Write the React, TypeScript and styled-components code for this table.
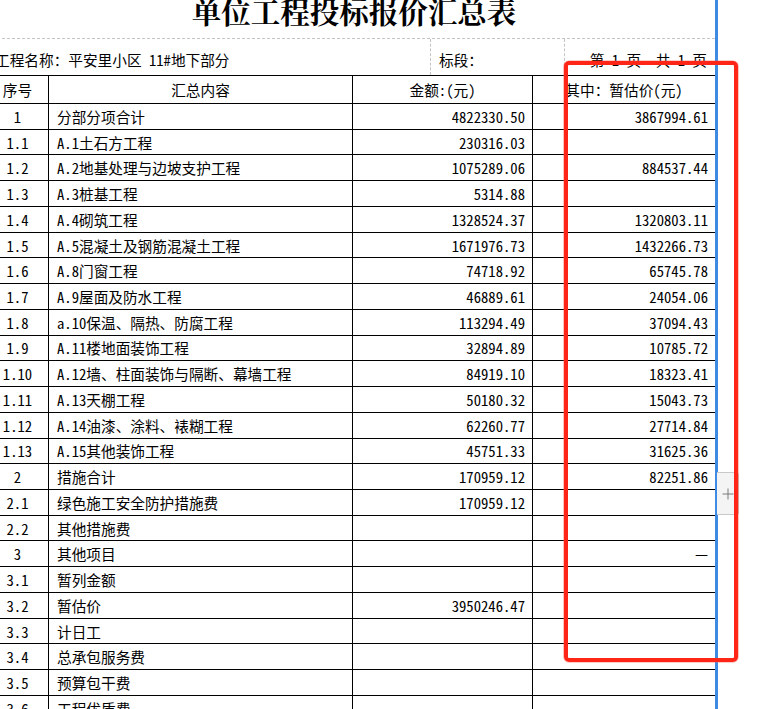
import React from "react";
import styled, { createGlobalStyle } from "styled-components";

const Global = createGlobalStyle`
  html, body { margin: 0; padding: 0; background: #fff; overflow: hidden; }
  #root { width: 763px; height: 709px; }
`;

const FONT = `"Noto Sans Mono CJK SC", "Noto Sans CJK SC", monospace`;

const Page = styled.div`
  position: relative;
  display: flex;
  width: 763px;
  height: 709px;
  overflow: hidden;
  font-family: ${FONT};
  font-size: 14.67px;
  color: #000;
`;

const Sheet = styled.div`
  flex: none;
  width: 728px;
  margin-left: -13px;
  display: flex;
  flex-direction: column;
  overflow: hidden;
  & > * { flex: none; }
`;

const TitleRow = styled.div`
  box-sizing: border-box;
  height: 39px;
  overflow: hidden;
  display: flex;
  align-items: flex-end;
  justify-content: center;
  padding-bottom: 13px;
  padding-left: 6px;
  border-bottom: 1px dashed #c4c4c4;
`;

const TitleText = styled.div`
  font-family: "Noto Serif CJK SC", "Noto Sans CJK SC", serif;
  font-weight: 700;
  font-size: 29.5px;
  line-height: 30px;
  white-space: nowrap;
`;

const InfoRow = styled.div`
  display: grid;
  grid-template-columns: 443px 134px 1fr;
  height: 36px;
`;

const InfoCell = styled.div<{ $dashed?: boolean; $right?: boolean }>`
  box-sizing: border-box;
  display: flex;
  align-items: flex-end;
  justify-content: ${(p) => (p.$right ? "flex-end" : "flex-start")};
  padding: 0 8px 5px 8px;
  border-left: ${(p) => (p.$dashed ? "1px dashed #c4c4c4" : "none")};
  white-space: pre;
`;

const COLS = "62px 304px 180px 182px";

const HeaderRow = styled.div`
  box-sizing: border-box;
  display: grid;
  grid-template-columns: ${COLS};
  height: 29px;
  border-top: 1px solid #000;
  border-bottom: 1px solid #000;
`;

const DataRow = styled.div`
  box-sizing: border-box;
  display: grid;
  grid-template-columns: ${COLS};
  height: 25.74px;
  border-bottom: 1px solid #000;
`;

const Cell = styled.div<{ $align: "left" | "center" | "right"; $last?: boolean }>`
  box-sizing: border-box;
  display: flex;
  align-items: center;
  justify-content: ${(p) =>
    p.$align === "left" ? "flex-start" : p.$align === "right" ? "flex-end" : "center"};
  padding: 0 ${(p) => (p.$align === "right" ? "7px" : "8px")} 0 8px;
  border-right: ${(p) => (p.$last ? "none" : "1px solid #000")};
  white-space: pre;
  overflow: hidden;
`;

const NumCell = styled(Cell)`
  padding-left: 0;
  padding-right: 0;
`;

const Splitter = styled.div`
  flex: none;
  width: 3px;
  height: 100%;
  background: #3f8be3;
`;

const Gutter = styled.div`
  flex: 1;
  background: #fff;
`;

const PlusTab = styled.div`
  position: absolute;
  left: 717px;
  top: 472px;
  width: 22px;
  height: 43px;
  box-sizing: border-box;
  background: #f4f4f4;
  border: 1px solid #c9c9c9;
  border-left: none;
  border-radius: 0 3px 3px 0;
  display: flex;
  align-items: center;
  justify-content: center;
`;

const Annotation = styled.div`
  position: absolute;
  left: 564px;
  top: 61px;
  width: 174px;
  height: 601px;
  box-sizing: border-box;
  border: 4px solid #ff2618;
  border-radius: 5px;
  box-shadow: 0 0 0 0.6px rgba(255, 90, 80, 0.6);
  pointer-events: none;
`;

type Row = [string, string, string, string];

const rows: Row[] = [
  ["1", "分部分项合计", "4822330.50", "3867994.61"],
  ["1.1", "A.1土石方工程", "230316.03", ""],
  ["1.2", "A.2地基处理与边坡支护工程", "1075289.06", "884537.44"],
  ["1.3", "A.3桩基工程", "5314.88", ""],
  ["1.4", "A.4砌筑工程", "1328524.37", "1320803.11"],
  ["1.5", "A.5混凝土及钢筋混凝土工程", "1671976.73", "1432266.73"],
  ["1.6", "A.8门窗工程", "74718.92", "65745.78"],
  ["1.7", "A.9屋面及防水工程", "46889.61", "24054.06"],
  ["1.8", "a.10保温、隔热、防腐工程", "113294.49", "37094.43"],
  ["1.9", "A.11楼地面装饰工程", "32894.89", "10785.72"],
  ["1.10", "A.12墙、柱面装饰与隔断、幕墙工程", "84919.10", "18323.41"],
  ["1.11", "A.13天棚工程", "50180.32", "15043.73"],
  ["1.12", "A.14油漆、涂料、裱糊工程", "62260.77", "27714.84"],
  ["1.13", "A.15其他装饰工程", "45751.33", "31625.36"],
  ["2", "措施合计", "170959.12", "82251.86"],
  ["2.1", "绿色施工安全防护措施费", "170959.12", ""],
  ["2.2", "其他措施费", "", ""],
  ["3", "其他项目", "", "—"],
  ["3.1", "暂列金额", "", ""],
  ["3.2", "暂估价", "3950246.47", ""],
  ["3.3", "计日工", "", ""],
  ["3.4", "总承包服务费", "", ""],
  ["3.5", "预算包干费", "", ""],
  ["3.6", "工程优质费", "", ""],
];

function PlusIcon() {
  return (
    <svg width="12" height="12" viewBox="0 0 12 12">
      <path d="M6 0.5V11.5M0.5 6H11.5" stroke="#7a7a7a" strokeWidth="1" fill="none" />
    </svg>
  );
}

export default function App() {
  return (
    <>
      <Global />
      <Page>
        <Sheet>
          <TitleRow>
            <TitleText>单位工程投标报价汇总表</TitleText>
          </TitleRow>
          <InfoRow>
            <InfoCell>工程名称：平安里小区 11#地下部分</InfoCell>
            <InfoCell $dashed>标段：</InfoCell>
            <InfoCell $dashed $right>第 1 页  共 1 页</InfoCell>
          </InfoRow>
          <HeaderRow>
            <NumCell $align="center">序号</NumCell>
            <Cell $align="center">汇总内容</Cell>
            <Cell $align="center">金额:(元)</Cell>
            <Cell $align="center" $last>其中：暂估价(元)</Cell>
          </HeaderRow>
          {rows.map((r) => (
            <DataRow key={r[0]}>
              <NumCell $align="center">{r[0]}</NumCell>
              <Cell $align="left">{r[1]}</Cell>
              <Cell $align="right">{r[2]}</Cell>
              <Cell $align="right" $last>{r[3]}</Cell>
            </DataRow>
          ))}
        </Sheet>
        <Splitter />
        <Gutter />
        <PlusTab>
          <PlusIcon />
        </PlusTab>
        <Annotation />
      </Page>
    </>
  );
}
